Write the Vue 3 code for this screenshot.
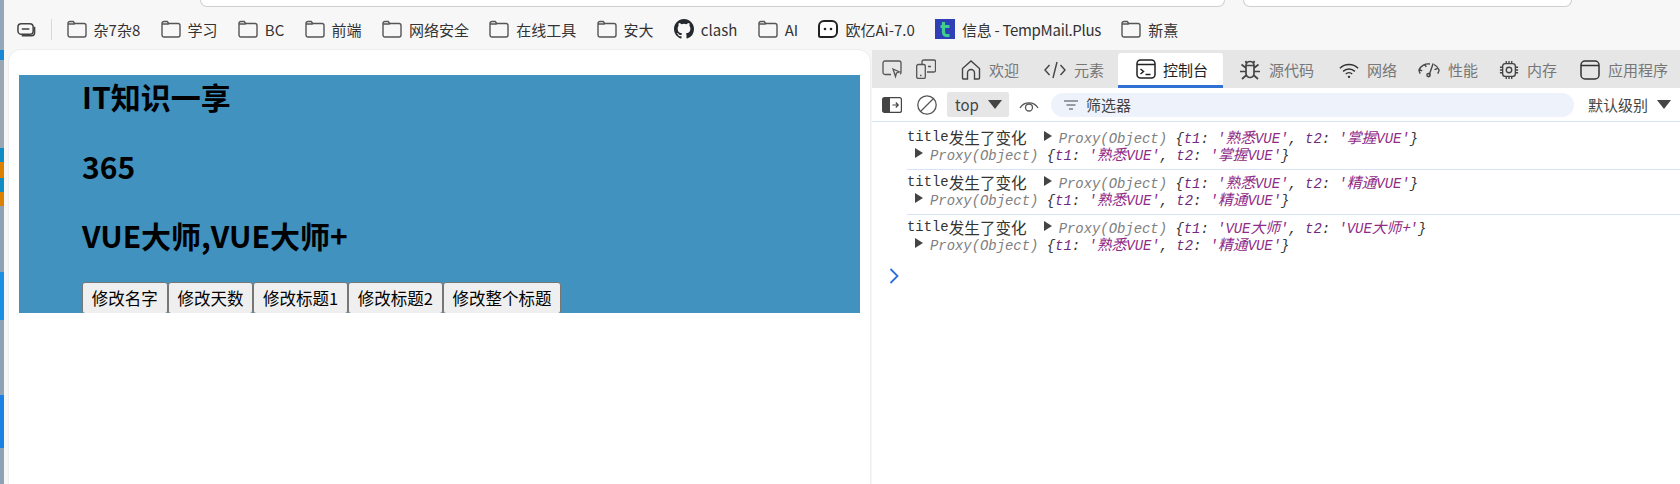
<script setup>
const bookmarks = [
  { icon: 'folder', label: '杂7杂8' }, { icon: 'folder', label: '学习' }, { icon: 'folder', label: 'BC' },
  { icon: 'folder', label: '前端' }, { icon: 'folder', label: '网络安全' }, { icon: 'folder', label: '在线工具' },
  { icon: 'folder', label: '安大' }, { icon: 'github', label: 'clash' }, { icon: 'folder', label: 'AI' },
  { icon: 'chat', label: '欧亿Ai-7.0' }, { icon: 't', label: '信息 - TempMail.Plus' }, { icon: 'folder', label: '新熹' }
]
const headings = ['IT知识一享', '365', 'VUE大师,VUE大师+']
const buttons = ['修改名字', '修改天数', '修改标题1', '修改标题2', '修改整个标题']
const logs = [
  { a: ['熟悉', 'VUE'], b: ['掌握', 'VUE'], c1: ['熟悉', 'VUE'], c2: ['掌握', 'VUE'] },
  { a: ['熟悉', 'VUE'], b: ['精通', 'VUE'], c1: ['熟悉', 'VUE'], c2: ['精通', 'VUE'] },
  { a: ['', 'VUE', '大师'], b: ['', 'VUE', '大师+'], c1: ['熟悉', 'VUE'], c2: ['精通', 'VUE'] }
]
</script>

<template>
  <div class="screen">
    <div class="wallpaper"></div>
    <div class="browser">
      <header class="chrome">
        <div class="address">
          <div class="addr addr-main"></div>
          <div class="addr addr-side"></div>
        </div>
        <nav class="bookmarks">
          <svg class="ic tabs-ic" viewBox="0 0 20 20" fill="none" stroke="#444" stroke-width="1.6">
            <rect x="1" y="4" width="16" height="11" rx="3.5" />
            <path d="M5 9.5h8M18.5 7v6.5a3 3 0 0 1-3 3H5" />
          </svg>
          <span class="sep"></span>
          <a v-for="b in bookmarks" :key="b.label" class="bm" :class="'bm-' + b.icon">
            <svg v-if="b.icon === 'folder'" class="ic" viewBox="0 0 20 20" fill="none" stroke="#555" stroke-width="1.4">
              <path d="M1 4.5a2 2 0 0 1 2-2h3.2l1.6 2H17a2 2 0 0 1 2 2V16a2 2 0 0 1-2 2H3a2 2 0 0 1-2-2zM1 5h6.800" />
            </svg>
            <svg v-else-if="b.icon === 'github'" class="ic" viewBox="0 0 16 16" fill="#24292f">
              <path d="M8 0C3.580 0 0 3.580 0 8c0 3.540 2.290 6.530 5.470 7.590.4.070.55-.17.55-.38 0-.19-.010-.82-.010-1.490-2.010.37-2.530-.49-2.690-.94-.090-.23-.48-.94-.82-1.130-.28-.15-.68-.52-.010-.53.63-.010 1.080.58 1.230.82.72 1.210 1.870.87 2.330.66.070-.52.28-.87.51-1.070-1.780-.2-3.640-.89-3.640-3.950 0-.87.31-1.590.82-2.150-.080-.2-.36-1.020.080-2.120 0 0 .67-.21 2.200.82a7.500 7.500 0 0 1 4 0c1.530-1.040 2.200-.82 2.200-.82.44 1.100.16 1.920.080 2.120.51.560.82 1.270.82 2.150 0 3.070-1.870 3.750-3.650 3.950.29.250.54.730.54 1.480 0 1.070-.010 1.930-.010 2.200 0 .21.150.46.550.38A8.010 8.010 0 0 0 16 8c0-4.420-3.580-8-8-8z" />
            </svg>
            <svg v-else-if="b.icon === 'chat'" class="ic" viewBox="0 0 20 20">
              <path d="M6 2h8a5 5 0 0 1 5 5v6a5 5 0 0 1-5 5H2.500A1.500 1.500 0 0 1 1 16.500V7a5 5 0 0 1 5-5z" fill="#fff" stroke="#222" stroke-width="2" />
              <circle cx="7" cy="10" r="1.300" fill="#222" /><circle cx="13" cy="10" r="1.300" fill="#222" />
            </svg>
            <svg v-else class="ic" viewBox="0 0 20 20">
              <rect width="20" height="20" fill="#2f3fb5" />
              <path d="M8.500 3v10.500a3 3 0 0 0 3 3h3M5.500 7.500h9" fill="none" stroke="#3ecf8e" stroke-width="3.200" />
            </svg>
            <span>{{ b.label }}</span>
          </a>
        </nav>
      </header>

      <div class="workspace">
        <main class="page">
          <section class="demo">
            <h2 v-for="h in headings" :key="h">{{ h }}</h2>
            <div class="btns">
              <button v-for="b in buttons" :key="b" type="button">{{ b }}</button>
            </div>
          </section>
        </main>

        <aside class="devtools">
          <div class="tabs">
            <svg class="dt inspect" viewBox="0 0 20 20" fill="none" stroke="#555" stroke-width="1.300">
              <path d="M9 15.500H3a2 2 0 0 1-2-2V4a2 2 0 0 1 2-2h14a2 2 0 0 1 2 2v9.500a2 2 0 0 1-1 1.700" />
              <path d="M11 10l6.500 3-3 1-1 3.500z" />
            </svg>
            <svg class="dt device" viewBox="0 0 20 20" fill="none" stroke="#555" stroke-width="1.300">
              <path d="M6 5V3a2 2 0 0 1 2-2h10a1.500 1.500 0 0 1 1.500 1.500v9A1.500 1.500 0 0 1 18 13h-7M12 7.500h3" />
              <rect x=".7" y="5.500" width="8.600" height="14" rx="1.500" />
              <path d="M4 16.500h1.500" />
            </svg>
            <a class="tab t-home">
              <svg class="dt" viewBox="0 0 20 20" fill="none" stroke="#444" stroke-width="1.400"><path d="M1.500 18V8.500L10 1l8.500 7.500V18a1 1 0 0 1-1 1H13.500v-6a3.500 3.500 0 0 0-7 0v6H2.500a1 1 0 0 1-1-1z" /></svg>
              <span>欢迎</span>
            </a>
            <a class="tab t-el">
              <svg class="dt wide" viewBox="0 0 22 20" fill="none" stroke="#444" stroke-width="1.400"><path d="M5.500 5L1 10l4.500 5M16.500 5L21 10l-4.500 5M13 2L9 18" /></svg>
              <span>元素</span>
            </a>
            <a class="tab active">
              <svg class="dt" viewBox="0 0 20 20" fill="none" stroke="#222" stroke-width="1.500"><rect x="1" y="1" width="18" height="18" rx="3.500" /><path d="M1 5.500h18M4.500 10l3 2.500-3 2.500M9.500 15.500h5" /></svg>
              <span>控制台</span>
            </a>
            <a class="tab t-src">
              <svg class="dt wide" viewBox="0 0 22 20" fill="none" stroke="#444" stroke-width="1.700"><path d="M7 5.500a4 4 0 0 1 8 0M7 5.500h8v8a4 4 0 0 1-8 0zM6.500 1L8 4M15.500 1L14 4M7 8L2.500 4.500M7 11.500H1M7.500 15l-4.500 4M15 8l4.500-3.500M15 11.500h6M14.500 15l4.500 4" /></svg>
              <span>源代码</span>
            </a>
            <a class="tab t-net">
              <svg class="dt" viewBox="0 0 22 20" fill="none" stroke="#333" stroke-width="1.600"><path d="M1 8a14.500 14.500 0 0 1 20 0M4.500 11.500a9.500 9.500 0 0 1 13 0M7.500 14.500a5 5 0 0 1 7 0" /><circle cx="11" cy="17.500" r="1.300" fill="#333" stroke="none" /></svg>
              <span>网络</span>
            </a>
            <a class="tab t-perf">
              <svg class="dt wide" viewBox="0 0 24 20" fill="none" stroke="#444" stroke-width="1.500"><path d="M2.500 14A10 10 0 0 1 1 10a11 11 0 0 1 12-6.500M1.500 9.500l3 1.500M7.500 4l1.500 2.500M17.500 4a11 11 0 0 1 5.500 6 10 10 0 0 1-1.500 4M18 9.500l3-1M16.500 3L12 16" /><circle cx="11.500" cy="15.500" r="1.800" /></svg>
              <span>性能</span>
            </a>
            <a class="tab t-mem">
              <svg class="dt" viewBox="0 0 22 20" fill="none" stroke="#444" stroke-width="1.500"><rect x="4" y="3" width="14" height="14" rx="3" /><circle cx="11" cy="10" r="3" /><path d="M8 0v3M11 0v3M14 0v3M8 17v3M11 17v3M14 17v3M1 7h3M1 10h3M1 13h3M18 7h3M18 10h3M18 13h3" /></svg>
              <span>内存</span>
            </a>
            <a class="tab t-app">
              <svg class="dt" viewBox="0 0 20 20" fill="none" stroke="#333" stroke-width="1.500"><rect x="1" y="1" width="18" height="18" rx="4" /><path d="M1 5.500h18" /></svg>
              <span>应用程序</span>
            </a>
          </div>

          <div class="toolbar">
            <svg class="dt dock" viewBox="0 0 20 16">
              <rect x=".6" y=".6" width="18.800" height="14.800" rx="2" fill="#fff" stroke="#444" stroke-width="1.200" />
              <path d="M2.500.6H8v14.800H2.500a2 2 0 0 1-2-2V2.600a2 2 0 0 1 2-2z" fill="#444" />
              <path d="M10.500 8h5.500M13.800 5.500L16.200 8l-2.400 2.500" fill="none" stroke="#444" stroke-width="1.200" />
            </svg>
            <svg class="dt block" viewBox="0 0 20 20" fill="none" stroke="#555" stroke-width="1.300"><circle cx="10" cy="10" r="9.200" /><path d="M3.500 16.500l13-13" /></svg>
            <div class="ctx"><span>top</span><i class="tri"></i></div>
            <svg class="dt eye" viewBox="0 0 20 14" fill="none" stroke="#555" stroke-width="1.300"><path d="M1 10a10.500 10.500 0 0 1 18 0" /><circle cx="10" cy="9.500" r="3.500" /></svg>
            <div class="filter">
              <svg class="fi" viewBox="0 0 14 10" fill="none" stroke="#444" stroke-width="1.200"><path d="M0 1h14M2.500 5h9M5 9h4" /></svg>
              <span>筛选器</span>
            </div>
            <div class="level"><span>默认级别</span><i class="tri"></i></div>
          </div>

          <div class="console">
            <div v-for="(l, i) in logs" :key="i" class="row">
              <div class="line">
                <span>title</span><span class="cjk">发生了变化</span>
                <i class="arrow first"></i>
                <span class="obj"><span class="gray">Proxy(Object) </span>{<span class="key">t1</span>: <span class="str">'<span class="cjk">{{ l.a[0] }}</span>{{ l.a[1] }}<span class="cjk">{{ l.a[2] }}</span>'</span>, <span class="key">t2</span>: <span class="str">'<span class="cjk">{{ l.b[0] }}</span>{{ l.b[1] }}<span class="cjk">{{ l.b[2] }}</span>'</span>}</span>
              </div>
              <div class="line second">
                <i class="arrow"></i>
                <span class="obj"><span class="gray">Proxy(Object) </span>{<span class="key">t1</span>: <span class="str">'<span class="cjk">{{ l.c1[0] }}</span>{{ l.c1[1] }}'</span>, <span class="key">t2</span>: <span class="str">'<span class="cjk">{{ l.c2[0] }}</span>{{ l.c2[1] }}'</span>}</span>
              </div>
            </div>
            <svg class="prompt" viewBox="0 0 10 16" fill="none" stroke="#2f6fdc" stroke-width="1.800"><path d="M1.500 1l7 7-7 7" /></svg>
          </div>
        </aside>
      </div>
    </div>
  </div>
</template>

<style>
html, body { margin: 0; background: #fff; overflow: hidden; }
</style>

<style scoped>
.screen {
  display: flex;
  width: 1680px;
  height: 484px;
  overflow: hidden;
  font-family: "Noto Sans CJK SC", "Noto Sans", sans-serif;
  color: #333;
}
.wallpaper {
  width: 4px;
  flex: none;
  background: linear-gradient(#93a7ba 0 50px, #1688d4 50px 60px, #9aa7b3 60px 148px, #108cc4 148px 162px, #dc8000 162px 178px, #108cc4 178px 192px, #dc8000 192px 206px, #8fa2b5 206px 272px, #1a90e4 272px 320px, #8fa2b5 320px 395px, #1a80e4 395px 448px, #8fa2b5 448px);
}
.browser { flex: 1; display: flex; flex-direction: column; min-width: 0; background: #f7f7f7; }
.chrome { height: 50px; flex: none; background: #f7f7f7; }
.address { height: 7px; display: flex; }
.addr {
  height: 7px;
  box-sizing: border-box;
  background: #fff;
  border: 1px solid #cfcfcf;
  border-top: 0;
  border-radius: 0 0 14px 14px;
}
.addr-main { margin-left: 196px; width: 1025px; }
.addr-side { margin-left: 18px; width: 329px; }
.bookmarks {
  display: flex;
  align-items: center;
  gap: 20.3px;
  height: 24px;
  margin-top: 10px;
  padding-left: 13px;
  font-size: 15px;
  white-space: nowrap;
}
.sep { width: 1px; height: 21px; background: #d9d9d9; margin: 0 -6px 0 -5px; }
.bm { display: flex; align-items: center; gap: 7px; }
.bm-t { letter-spacing: -0.3px; }
.ic { width: 20px; height: 20px; flex: none; }
.tabs-ic { width: 19px; height: 19px; }

.workspace { flex: 1; display: flex; min-height: 0; }
.page {
  width: 861px;
  flex: none;
  margin-left: 5px;
  box-sizing: border-box;
  padding: 25px 10px 0 10px;
  background: #fff;
  border-radius: 12px 12px 0 0;
  box-shadow: 0 0 0 1px #eeeeee;
}
.demo {
  height: 238px;
  overflow: hidden;
  padding-left: 63px;
  background: #4192bf;
  color: #000;
}
h2 { margin: 0 0 27.5px; font-size: 30px; line-height: 42px; font-weight: 700; }
.btns { display: flex; margin-top: -2px; }
button {
  height: 32px;
  box-sizing: border-box;
  padding: 0 8.8px;
  font: 16.5px "Noto Sans CJK SC", sans-serif;
  color: #000;
  background: #efefef;
  border: 1px solid #767676;
  border-radius: 3px;
  line-height: 28px;
  white-space: nowrap;
  align-self: flex-start;
}

.devtools { flex: 1; margin-left: 2px; min-width: 0; background: #fff; font-size: 15px; }
.tabs { display: flex; align-items: center; height: 38px; padding-left: 10px; background: #e6e6e6; color: #777; white-space: nowrap; }
.tab { display: flex; align-items: center; gap: 8px; height: 35px; margin-top: 1px; }
.dt { width: 20px; height: 20px; flex: none; }
.dt.wide { width: 22px; }
.device { margin-left: 14px; }
.t-home { margin-left: 25px; }
.t-el { margin-left: 25px; }
.active {
  margin-left: 14px;
  padding: 0 14px 0 18px;
  box-sizing: border-box;
  width: 105px;
  height: 35px;
  gap: 7px;
  margin-top: 3px;
  color: #222;
  background: #fff;
  border-bottom: 3px solid #3071d1;
  border-radius: 3px 3px 0 0;
}
.t-src { margin-left: 16px; }
.t-net { margin-left: 25px; }
.t-perf { margin-left: 21px; }
.t-mem { margin-left: 21px; }
.t-app { margin-left: 23px; }

.toolbar { display: flex; align-items: center; height: 33px; padding-left: 10px; border-bottom: 1px solid #d6e2f5; color: #444; }
.dock { height: 16px; }
.block { margin-left: 15px; }
.ctx { display: flex; align-items: center; gap: 9px; box-sizing: border-box; width: 62px; height: 25px; margin-left: 10px; padding-left: 8px; background: #e6e6e6; border-radius: 2px; }
.tri { width: 0; height: 0; border-left: 7px solid transparent; border-right: 7px solid transparent; border-top: 9px solid #444; }
.eye { height: 14px; margin-left: 10px; }
.filter { display: flex; align-items: center; gap: 8px; box-sizing: border-box; width: 523px; height: 24px; margin-left: 12px; padding-left: 13px; background: #edf2fb; border-radius: 12px; }
.fi { width: 14px; height: 10px; }
.level { display: flex; align-items: center; gap: 9px; margin-left: 14px; white-space: nowrap; }

.console { font: 13.9px/17.5px "Liberation Mono", monospace; color: #333; }
.row { padding: 4px 0 5px; margin-left: 35px; border-bottom: 1px solid #d6e2f5; white-space: nowrap; }
.row:first-child { padding-top: 7px; }
.row:last-of-type { border-bottom: 0; }
.line { height: 17.5px; display: flex; align-items: center; }
.second { padding-left: 8px; }
.cjk { font-family: "Noto Sans CJK SC", sans-serif; font-size: 15.6px; }
.obj .cjk { font-size: 14.8px; }
.obj { font-style: italic; white-space: pre; }
.gray { color: #808080; }
.key { color: #6f2b7f; }
.str { color: #8f2a86; }
.arrow { flex: none; width: 0; height: 0; margin-right: 7px; border-top: 5px solid transparent; border-bottom: 5px solid transparent; border-left: 8px solid #444; transform: translateY(-2px); }
.arrow.first { margin-left: 17px; }
.prompt { display: block; width: 10px; height: 16px; margin: 9px 0 0 17px; }
</style>
